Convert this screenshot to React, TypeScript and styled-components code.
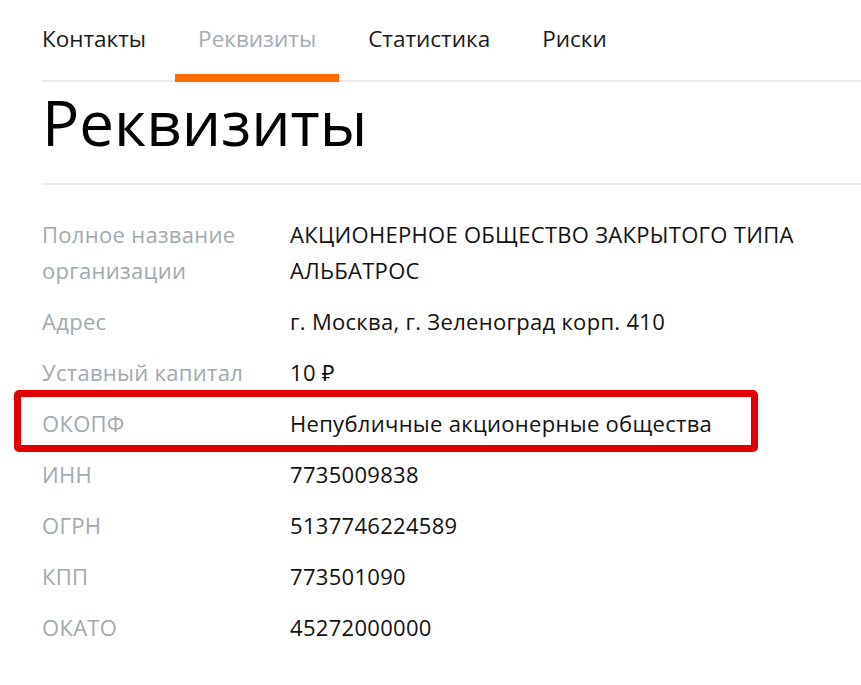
import React from "react";
import styled, { createGlobalStyle } from "styled-components";

const GlobalStyle = createGlobalStyle`
  html, body {
    margin: 0;
    padding: 0;
    background: #fff;
  }
  body {
    font-family: "Open Sans", "Noto Sans", sans-serif;
    color: #111;
  }
`;

const Page = styled.div`
  padding: 24px 0 40px 42px;
`;

const TabList = styled.nav`
  display: flex;
  gap: 6px;
  border-bottom: 2px solid #ebebeb;
`;

const Tab = styled.div<{ $active?: boolean; $first?: boolean }>`
  font-size: 22.5px;
  line-height: 30px;
  padding: 0 23px 20px ${(p) => (p.$first ? "0" : "23px")};
  margin-bottom: -2px;
  color: ${(p) => (p.$active ? "#a5acb3" : "#1a1a1a")};
  border-bottom: 8px solid ${(p) => (p.$active ? "#ff6a00" : "transparent")};
  cursor: pointer;
`;

const Title = styled.h1`
  margin: 4px 0 0;
  font-size: 62px;
  line-height: 72px;
  font-weight: 400;
  color: #000;
  padding-bottom: 25px;
  border-bottom: 2px solid #ebebeb;
`;

const List = styled.dl`
  margin: 31px 0 0;
  display: flex;
  flex-direction: column;
  gap: 15px;
`;

const Row = styled.div`
  position: relative;
  display: grid;
  grid-template-columns: 248px 1fr;
  font-size: 22px;
  letter-spacing: 0.3px;
  line-height: 36px;
`;

const Label = styled.dt`
  margin: 0;
  color: #a2a9b0;
`;

const Value = styled.dd`
  margin: 0;
  color: #111;
  max-width: 540px;
`;

const Highlight = styled.div`
  position: absolute;
  left: -28px;
  top: -15px;
  width: 744px;
  bottom: -11px;
  box-sizing: border-box;
  border: 7px solid #e10000;
  border-radius: 5px;
  pointer-events: none;
`;

const tabs = ["Контакты", "Реквизиты", "Статистика", "Риски"];

const rows: { label: string; value: string; marked?: boolean }[] = [
  {
    label: "Полное название организации",
    value: "АКЦИОНЕРНОЕ ОБЩЕСТВО ЗАКРЫТОГО ТИПА АЛЬБАТРОС",
  },
  { label: "Адрес", value: "г. Москва, г. Зеленоград корп. 410" },
  { label: "Уставный капитал", value: "10 ₽" },
  { label: "ОКОПФ", value: "Непубличные акционерные общества", marked: true },
  { label: "ИНН", value: "7735009838" },
  { label: "ОГРН", value: "5137746224589" },
  { label: "КПП", value: "773501090" },
  { label: "ОКАТО", value: "45272000000" },
];

export default function App() {
  return (
    <>
      <GlobalStyle />
      <Page>
        <TabList>
          {tabs.map((t, i) => (
            <Tab key={t} $first={i === 0} $active={t === "Реквизиты"}>
              {t}
            </Tab>
          ))}
        </TabList>
        <Title>Реквизиты</Title>
        <List>
          {rows.map((r) => (
            <Row key={r.label}>
              <Label>
                {r.label === "Полное название организации" ? (
                  <>
                    Полное название
                    <br />
                    организации
                  </>
                ) : (
                  r.label
                )}
              </Label>
              <Value>{r.value}</Value>
              {r.marked && <Highlight />}
            </Row>
          ))}
        </List>
      </Page>
    </>
  );
}
